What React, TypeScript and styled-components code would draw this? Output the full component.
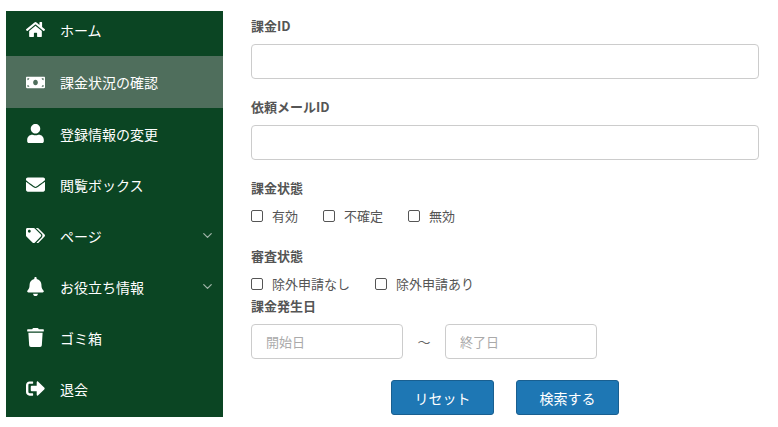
import React from 'react';
import styled, { createGlobalStyle } from 'styled-components';
import { FaHome, FaMoneyBill, FaUser, FaEnvelope, FaTags, FaBell, FaTrash, FaSignOutAlt } from 'react-icons/fa';
import { FiChevronDown } from 'react-icons/fi';

const Global = createGlobalStyle`
  body { margin: 0; font-family: "Noto Sans CJK JP", "Liberation Sans", sans-serif; background: #fff; }
`;

const Page = styled.div`
  display: flex;
  width: 778px;
  height: 427px;
  overflow: hidden;
`;

const Sidebar = styled.nav`
  width: 217px;
  margin: 11px 0 0 6px;
  height: 406px;
  background: #0b4523;
  display: flex;
  flex-direction: column;
`;

const NavItem = styled.div<{ active?: boolean; h?: number; pb?: number }>`
  height: ${p => p.h ?? 51}px;
  box-sizing: border-box;
  padding: 0 8px ${p => p.pb ?? 0}px 18px;
  flex-shrink: 0;
  display: flex;
  align-items: center;
  color: #fff;
  font-size: 14px;
  background: ${p => (p.active ? '#4f6e5c' : 'transparent')};
`;

const Icon = styled.span`
  width: 22px;
  display: flex;
  justify-content: center;
  margin-right: 14px;
  font-size: 19px;
`;

const Label = styled.span`
  flex: 1;
`;

const Chevron = styled(FiChevronDown)`
  color: #9fb4a7;
  font-size: 15px;
`;

const Main = styled.main`
  margin-left: 28px;
  width: 508px;
  padding-top: 17px;
  display: flex;
  flex-direction: column;
`;

const FieldLabel = styled.div<{ mt?: number }>`
  font-size: 13px;
  font-weight: 700;
  color: #555;
  margin-top: ${p => p.mt ?? 0}px;
  line-height: 18px;
`;

const TextInput = styled.input`
  box-sizing: border-box;
  width: 100%;
  height: 35px;
  margin-top: 9px;
  border: 1px solid #ccc;
  border-radius: 4px;
`;

const CheckRow = styled.div`
  display: flex;
  gap: 25px;
  margin-top: 10px;
  font-size: 13px;
  color: #555;
  line-height: 18px;
`;

const Check = styled.label`
  display: flex;
  align-items: center;
  gap: 9px;
`;

const Box = styled.span`
  width: 10px;
  height: 10px;
  border: 1px solid #555;
  border-radius: 2px;
`;

const DateRow = styled.div`
  display: flex;
  align-items: center;
  margin-top: 9px;
  font-size: 13px;
`;

const DateInput = styled.input`
  box-sizing: border-box;
  width: 152px;
  height: 35px;
  border: 1px solid #ccc;
  border-radius: 4px;
  padding: 0 14px;
  font-family: inherit;
  font-size: 13px;
  &::placeholder { color: #aaa; }
`;

const Tilde = styled.span`
  width: 42px;
  text-align: center;
  color: #666;
`;

const Buttons = styled.div`
  display: flex;
  gap: 22px;
  margin: 21px 0 0 140px;
`;

const Button = styled.button`
  width: 103px;
  height: 35px;
  background: #1e77b4;
  color: #fff;
  border: 1px solid #195f90;
  border-radius: 3px;
  font-family: inherit;
  font-size: 14px;
`;

const nav = [
  { icon: <FaHome />, label: 'ホーム', h: 45, pb: 8 },
  { icon: <FaMoneyBill />, label: '課金状況の確認', active: true, h: 52 },
  { icon: <FaUser />, label: '登録情報の変更' },
  { icon: <FaEnvelope />, label: '閲覧ボックス' },
  { icon: <FaTags />, label: 'ページ', sub: true },
  { icon: <FaBell />, label: 'お役立ち情報', sub: true },
  { icon: <FaTrash />, label: 'ゴミ箱' },
  { icon: <FaSignOutAlt />, label: '退会' },
];

export default function App() {
  return (
    <Page>
      <Global />
      <Sidebar>
        {nav.map(n => (
          <NavItem key={n.label} active={n.active} h={n.h} pb={n.pb}>
            <Icon>{n.icon}</Icon>
            <Label>{n.label}</Label>
            {n.sub && <Chevron />}
          </NavItem>
        ))}
      </Sidebar>
      <Main>
        <FieldLabel>課金ID</FieldLabel>
        <TextInput />
        <FieldLabel mt={19}>依頼メールID</FieldLabel>
        <TextInput />
        <FieldLabel mt={19}>課金状態</FieldLabel>
        <CheckRow>
          <Check><Box />有効</Check>
          <Check><Box />不確定</Check>
          <Check><Box />無効</Check>
        </CheckRow>
        <FieldLabel mt={22}>審査状態</FieldLabel>
        <CheckRow>
          <Check><Box />除外申請なし</Check>
          <Check><Box />除外申請あり</Check>
        </CheckRow>
        <FieldLabel mt={4}>課金発生日</FieldLabel>
        <DateRow>
          <DateInput placeholder="開始日" />
          <Tilde>～</Tilde>
          <DateInput placeholder="終了日" />
        </DateRow>
        <Buttons>
          <Button>リセット</Button>
          <Button>検索する</Button>
        </Buttons>
      </Main>
    </Page>
  );
}
